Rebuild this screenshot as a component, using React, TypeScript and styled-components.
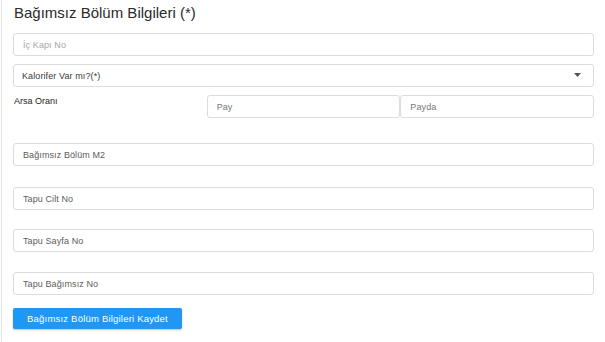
import React from "react";
import styled, { createGlobalStyle } from "styled-components";

const GlobalStyle = createGlobalStyle`
  html, body {
    margin: 0;
    padding: 0;
    background: #fff;
  }
  body {
    font-family: "Liberation Sans", Arial, sans-serif;
  }
`;

const Wrapper = styled.div`
  margin-left: 1px;
  border-left: 1px solid #e2e2e2;
  padding: 4px 11px 13px 11px;
  min-height: 342px;
  box-sizing: border-box;
  display: flex;
  flex-direction: column;
`;

const Title = styled.h2`
  margin: 0 0 11px 1px;
  font-size: 15px;
  line-height: 18px;
  font-weight: 400;
  color: #2a2a2a;
`;

const Field = styled.div<{ $mt?: number }>`
  position: relative;
  margin-top: ${(p) => p.$mt ?? 0}px;
`;

const Input = styled.input<{ $light?: boolean }>`
  display: block;
  width: 100%;
  height: 23px;
  box-sizing: border-box;
  border: 1px solid #dcdcdc;
  border-radius: 3px;
  padding: 0 9px;
  font-family: "Liberation Sans", Arial, sans-serif;
  font-size: 9px;
  letter-spacing: 0.1px;
  color: #444;
  background: #fff;
  outline: none;
  &::placeholder {
    color: ${(p) => (p.$light ? "#a8a8a8" : "#5c5c5c")};
    opacity: 1;
  }
`;

const Select = styled.select`
  display: block;
  width: 100%;
  height: 23px;
  box-sizing: border-box;
  border: 1px solid #dcdcdc;
  border-radius: 3px;
  padding: 0 8px;
  font-family: "Liberation Sans", Arial, sans-serif;
  font-size: 9px;
  letter-spacing: 0.1px;
  color: #3a3a3a;
  background: #fff;
  appearance: none;
  outline: none;
`;

const Caret = styled.svg`
  position: absolute;
  right: 13px;
  top: 9px;
  width: 7px;
  height: 4px;
  pointer-events: none;
`;

const RatioRow = styled.div`
  display: grid;
  grid-template-columns: 1fr 1fr 1fr;
  margin-top: 8px;
  align-items: start;
`;

const RatioLabel = styled.label`
  font-size: 9px;
  color: #222;
  padding: 1px 0 0 1px;
  font-weight: 400;
`;

const RatioInput = styled(Input)`
  &::placeholder {
    color: #777;
  }
`;

const SaveButton = styled.button`
  align-self: flex-start;
  margin-top: 13px;
  height: 21px;
  width: 169px;
  border: none;
  border-radius: 2px;
  background: #2196f3;
  color: #fff;
  font-family: "Liberation Sans", Arial, sans-serif;
  font-size: 9.5px;
  font-weight: 400;
  letter-spacing: 0.2px;
  box-shadow: 0 1px 2px rgba(0, 0, 0, 0.25);
  cursor: pointer;
`;

const App = () => {
  return (
    <Wrapper>
      <GlobalStyle />
      <Title>Bağımsız Bölüm Bilgileri (*)</Title>
      <Field>
        <Input $light placeholder="İç Kapı No" />
      </Field>
      <Field $mt={8}>
        <Select defaultValue="">
          <option value="">Kalorifer Var mı?(*)</option>
          <option value="1">Evet</option>
          <option value="0">Hayır</option>
        </Select>
        <Caret viewBox="0 0 7 4">
          <path d="M0 0h7L3.5 4z" fill="#555" />
        </Caret>
      </Field>
      <RatioRow>
        <RatioLabel>Arsa Oranı</RatioLabel>
        <RatioInput placeholder="Pay" />
        <RatioInput placeholder="Payda" />
      </RatioRow>
      <Field $mt={25}>
        <Input placeholder="Bağımsız Bölüm M2" />
      </Field>
      <Field $mt={21}>
        <Input placeholder="Tapu Cilt No" />
      </Field>
      <Field $mt={19}>
        <Input placeholder="Tapu Sayfa No" />
      </Field>
      <Field $mt={20}>
        <Input placeholder="Tapu Bağımsız No" />
      </Field>
      <SaveButton>Bağımsız Bölüm Bilgileri Kaydet</SaveButton>
    </Wrapper>
  );
};

export default App;
